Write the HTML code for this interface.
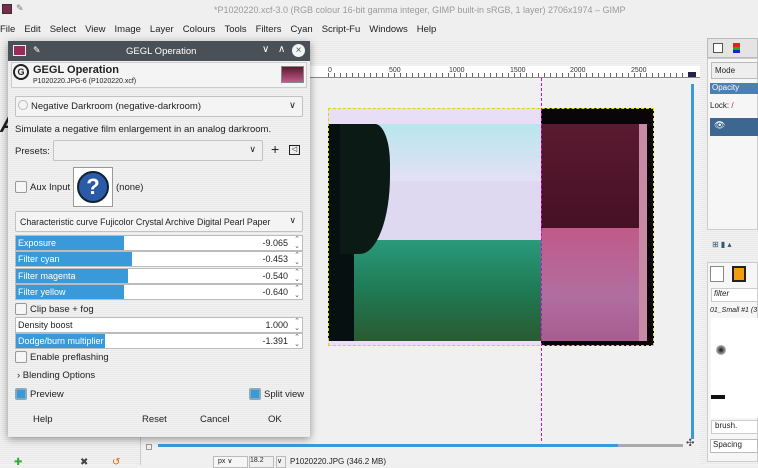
<!DOCTYPE html>
<html><head><meta charset="utf-8"><style>
*{margin:0;padding:0;box-sizing:border-box}
body{width:758px;height:465px;overflow:hidden;position:relative;background:#efefef;font-family:"Liberation Sans","DejaVu Sans",sans-serif;font-size:9px;color:#222}
.a{position:absolute}
.stripe{background:repeating-linear-gradient(#f2f2f2 0 1px,#e9e9e9 1px 2px)}
.sl{position:absolute;left:15px;width:288px;height:16px;background:#fff;border:1px solid #bcbcbc}
.sl .f{position:absolute;left:0;top:0;bottom:0;background:#3a9ad9}
.sl .l{position:absolute;left:2px;top:2px;color:#fff;font-size:9px}
.sl .v{position:absolute;right:14px;top:2px;font-size:9px}
.sl .s{position:absolute;right:2px;top:0;font-size:7px;line-height:7px;color:#555}
.cb{position:absolute;width:12px;height:12px;border:1px solid #999;background:#f6f6f6;border-radius:2px}
.cbon{background:#3a9ad9;border:2px solid #8ab}
</style></head><body>
<div class="a" style="left:0;top:0;width:758px;height:20px;background:#efefef"></div>
<div class="a" style="left:2px;top:4px;width:10px;height:10px;background:#7a2a4a;border:1px solid #333"></div>
<div class="a" style="left:16px;top:3px;color:#777;font-size:9px">✎</div>
<div class="a" style="left:214px;top:5px;color:#9a9a9a;font-size:9px;white-space:nowrap">*P1020220.xcf-3.0 (RGB colour 16-bit gamma integer, GIMP built-in sRGB, 1 layer) 2706x1974 – GIMP</div>
<div class="a" style="left:0;top:24px;font-size:9.5px;white-space:nowrap;word-spacing:0">
<span style="margin-right:9px">File</span><span style="margin-right:9px">Edit</span><span style="margin-right:9px">Select</span><span style="margin-right:9px">View</span><span style="margin-right:9px">Image</span><span style="margin-right:9px">Layer</span><span style="margin-right:9px">Colours</span><span style="margin-right:9px">Tools</span><span style="margin-right:9px">Filters</span><span style="margin-right:9px">Cyan</span><span style="margin-right:9px">Script-Fu</span><span style="margin-right:9px">Windows</span><span>Help</span></div>
<div class="a stripe" style="left:0;top:40px;width:705px;height:25px"></div>
<div class="a stripe" style="left:0;top:60px;width:140px;height:405px"></div>
<div class="a" style="left:0;top:112px;color:#222;font-size:22px;font-weight:bold;font-style:italic">A</div>
<div class="a" style="left:140px;top:66px;width:565px;height:399px;background:#f0f0f0;border-left:1px solid #ccc"></div>
<div class="a" style="left:140px;top:66px;width:560px;height:12px;background:#fff;border-bottom:1px solid #888"></div>
<div class="a" style="left:328px;top:67px;width:360px;height:10px;background:repeating-linear-gradient(90deg,#666 0 1px,transparent 1px 6px);clip-path:inset(6px 0 0 0)"></div>
<div class="a" style="left:328px;top:67px;font-size:7px;color:#333">0</div>
<div class="a" style="left:389px;top:67px;font-size:7px;color:#333">500</div>
<div class="a" style="left:449px;top:67px;font-size:7px;color:#333">1000</div>
<div class="a" style="left:510px;top:67px;font-size:7px;color:#333">1500</div>
<div class="a" style="left:570px;top:67px;font-size:7px;color:#333">2000</div>
<div class="a" style="left:631px;top:67px;font-size:7px;color:#333">2500</div>
<div class="a" style="left:688px;top:72px;width:8px;height:5px;background:#224"></div>
<div class="a" style="left:328px;top:108px;width:213px;height:238px;background:#e8def5"></div>
<div class="a" style="left:328px;top:124px;width:213px;height:57px;background:linear-gradient(#b8e6ee,#e4e0f4)"></div>
<div class="a" style="left:328px;top:181px;width:213px;height:60px;background:#ded8f0"></div>
<div class="a" style="left:328px;top:240px;width:213px;height:101px;background:linear-gradient(#2a9a7a,#1f7a55 50%,#2a5a30)"></div>
<div class="a" style="left:328px;top:124px;width:26px;height:217px;background:#071010"></div>
<div class="a" style="left:340px;top:124px;width:50px;height:130px;background:#0c1a16;border-radius:0 30% 60% 0"></div>
<div class="a" style="left:541px;top:108px;width:113px;height:238px;background:#0a0508"></div>
<div class="a" style="left:541px;top:124px;width:103px;height:108px;background:linear-gradient(#5a1a30,#461024)"></div>
<div class="a" style="left:541px;top:228px;width:103px;height:113px;background:linear-gradient(#c05a88,#b06ea0 60%,#a85c90)"></div>
<div class="a" style="left:639px;top:124px;width:8px;height:217px;background:#c78aa4"></div>
<div class="a" style="left:328px;top:108px;width:326px;height:238px;border:1px dashed #dada00"></div>
<div class="a" style="left:541px;top:78px;width:1px;height:365px;background:repeating-linear-gradient(#e000e0 0 3px,transparent 3px 5px)"></div>
<div class="a" style="left:691px;top:84px;width:3px;height:355px;background:#3a9ad9"></div>
<div class="a" style="left:158px;top:444px;width:460px;height:3px;background:#3a9ad9"></div>
<div class="a" style="left:618px;top:444px;width:65px;height:3px;background:#aaa"></div>
<div class="a" style="left:686px;top:438px;font-size:10px;color:#444">✣</div>
<div class="a" style="left:145px;top:432px;font-size:7px">0▫</div>
<div class="a" style="left:146px;top:444px;width:6px;height:6px;border:1px solid #999"></div>
<div class="a" style="left:213px;top:456px;width:35px;height:12px;border:1px solid #bbb;background:#f6f6f6;font-size:7px;padding-left:4px">px ∨</div>
<div class="a" style="left:249px;top:456px;width:25px;height:12px;border:1px solid #bbb;font-size:7px">18.2</div>
<div class="a" style="left:276px;top:456px;width:10px;height:12px;border:1px solid #bbb;font-size:7px">∨</div>
<div class="a" style="left:290px;top:457px;font-size:8px">P1020220.JPG (346.2 MB)</div>
<div class="a" style="left:14px;top:457px;color:#3a3;font-size:10px">✚</div>
<div class="a" style="left:80px;top:457px;color:#444;font-size:10px">✖</div>
<div class="a" style="left:112px;top:457px;color:#d60;font-size:10px">↺</div>
<div class="a stripe" style="left:700px;top:40px;width:58px;height:425px"></div>
<div class="a" style="left:707px;top:38px;width:51px;height:20px;background:#e4e4e4;border:1px solid #bbb"></div>
<div class="a" style="left:713px;top:43px;width:10px;height:10px;border:1px solid #555;background:#fff"></div>
<div class="a" style="left:733px;top:43px;width:7px;height:4px;background:#d22"></div>
<div class="a" style="left:733px;top:47px;width:7px;height:3px;background:#2a2"></div>
<div class="a" style="left:733px;top:50px;width:7px;height:3px;background:#22b"></div>
<div class="a" style="left:707px;top:58px;width:51px;height:172px;background:#f6f6f6;border:1px solid #ccc"></div>
<div class="a" style="left:711px;top:62px;width:47px;height:17px;border:1px solid #bbb;background:#eee;padding:3px;font-size:8px">Mode</div>
<div class="a" style="left:710px;top:83px;width:48px;height:11px;background:#4d7fb2;color:#fff;font-size:8px;padding-left:2px">Opacity</div>
<div class="a" style="left:710px;top:101px;font-size:8px">Lock: <span style="color:#a33">/</span></div>
<div class="a" style="left:710px;top:118px;width:48px;height:18px;background:#3d6690;color:#fff;font-size:9px;padding:2px 4px">👁</div>
<div class="a" style="left:712px;top:240px;font-size:8px;color:#357">⊞ ▮ ▴</div>
<div class="a" style="left:707px;top:262px;width:51px;height:200px;background:#f6f6f6;border:1px solid #ccc"></div>
<div class="a" style="left:710px;top:266px;width:14px;height:16px;border:1px solid #888;background:#fff"></div>
<div class="a" style="left:732px;top:266px;width:14px;height:16px;background:#f39c12;border:2px solid #222"></div>
<div class="a" style="left:711px;top:288px;width:47px;height:14px;background:#fff;border:1px solid #ccc;font-size:8px;font-style:italic;padding-left:2px">filter</div>
<div class="a" style="left:710px;top:307px;font-size:7px;font-style:italic;white-space:nowrap">01_Small #1 (3</div>
<div class="a" style="left:711px;top:318px;width:47px;height:100px;background:#fff"></div>
<div class="a" style="left:716px;top:345px;width:10px;height:10px;border-radius:50%;background:radial-gradient(#111,#fff)"></div>
<div class="a" style="left:711px;top:395px;width:14px;height:4px;background:#111"></div>
<div class="a" style="left:711px;top:420px;width:47px;height:14px;border:1px solid #ccc;background:#fff;font-size:8px;padding-left:3px">brush.</div>
<div class="a" style="left:710px;top:439px;width:48px;height:14px;border:1px solid #bbb;background:#fff;font-size:8px;padding-left:2px">Spacing</div>
<div class="a stripe" style="left:8px;top:41px;width:302px;height:396px;box-shadow:0 2px 8px rgba(0,0,0,.4)"></div>
<div class="a" style="left:8px;top:41px;width:302px;height:20px;background:#4a5057"></div>
<div class="a" style="left:13px;top:45px;width:13px;height:11px;background:#9a2a5a;border:1px solid #eee"></div>
<div class="a" style="left:33px;top:45px;color:#fff;font-size:9px">✎</div>
<div class="a" style="left:126px;top:46px;color:#fff;font-size:9.5px">GEGL Operation</div>
<div class="a" style="left:262px;top:44px;color:#fff;font-size:10px">∨</div>
<div class="a" style="left:278px;top:44px;color:#fff;font-size:10px">∧</div>
<div class="a" style="left:292px;top:44px;width:13px;height:13px;border-radius:50%;background:#f4f4f4;color:#4a5057;font-size:10px;text-align:center;line-height:13px">×</div>
<div class="a" style="left:11px;top:62px;width:296px;height:26px;border:1px solid #ccc;background:#f4f4f4"></div>
<div class="a" style="left:13px;top:64px;width:16px;height:16px;border:2px solid #222;border-radius:50%;font-size:9px;font-weight:bold;text-align:center;line-height:12px">G</div>
<div class="a" style="left:33px;top:64px;font-size:11px;font-weight:bold">GEGL Operation</div>
<div class="a" style="left:33px;top:78px;font-size:7px">P1020220.JPG-6 (P1020220.xcf)</div>
<div class="a" style="left:281px;top:66px;width:23px;height:17px;background:linear-gradient(#5a1a30,#c05a88);border:1px solid #888"></div>
<div class="a" style="left:15px;top:96px;width:288px;height:21px;border:1px solid #c2c2c2;background:#f4f4f4;border-radius:2px;padding:4px 0 0 15px;font-size:9.5px">Negative Darkroom (negative-darkroom)<span style="position:absolute;right:6px;top:3px">∨</span></div>
<div class="a" style="left:18px;top:100px;width:10px;height:10px;border:1px solid #bbb;border-radius:50%"></div>
<div class="a" style="left:15px;top:124px;font-size:9.5px">Simulate a negative film enlargement in an analog darkroom.</div>
<div class="a" style="left:15px;top:146px;font-size:9.5px">Presets:</div>
<div class="a" style="left:53px;top:140px;width:210px;height:21px;border:1px solid #c2c2c2;background:#f0f0f0;border-radius:2px"><span style="position:absolute;right:6px;top:3px;font-size:9px">∨</span></div>
<div class="a" style="left:271px;top:141px;font-size:14px">+</div>
<div class="a" style="left:289px;top:145px;width:11px;height:10px;border:1px solid #222;font-size:7px;line-height:8px;text-align:center">◁</div>
<div class="cb" style="left:15px;top:181px"></div>
<div class="a" style="left:30px;top:182px;font-size:9.5px">Aux Input</div>
<div class="a" style="left:73px;top:167px;width:40px;height:40px;border:1px solid #999;background:#fff"></div>
<div class="a" style="left:77px;top:171px;width:32px;height:32px;border-radius:50%;background:#2a5aa8;border:2px solid #123;color:#fff;font-size:22px;font-weight:bold;text-align:center;line-height:28px">?</div>
<div class="a" style="left:116px;top:182px;font-size:9.5px">(none)</div>
<div class="a" style="left:15px;top:211px;width:288px;height:21px;border:1px solid #c2c2c2;background:#f4f4f4;border-radius:2px;padding:5px 0 0 4px;font-size:8.8px;white-space:nowrap">Characteristic curve Fujicolor Crystal Archive Digital Pearl Paper<span style="position:absolute;right:6px;top:3px">∨</span></div>
<div class="sl" style="top:235px"><div class="f" style="width:108px"></div><div class="l">Exposure</div><div class="v">-9.065</div><div class="s">⌃<br>⌄</div></div>
<div class="sl" style="top:251px"><div class="f" style="width:116px"></div><div class="l">Filter cyan</div><div class="v">-0.453</div><div class="s">⌃<br>⌄</div></div>
<div class="sl" style="top:268px"><div class="f" style="width:112px"></div><div class="l">Filter magenta</div><div class="v">-0.540</div><div class="s">⌃<br>⌄</div></div>
<div class="sl" style="top:284px"><div class="f" style="width:108px"></div><div class="l">Filter yellow</div><div class="v">-0.640</div><div class="s">⌃<br>⌄</div></div>
<div class="cb" style="left:15px;top:303px"></div>
<div class="a" style="left:30px;top:304px;font-size:9.5px">Clip base + fog</div>
<div class="sl" style="top:317px"><div class="l" style="color:#222">Density boost</div><div class="v">1.000</div><div class="s">⌃<br>⌄</div></div>
<div class="sl" style="top:333px"><div class="f" style="width:89px"></div><div class="l" style="color:#fff">Dodge/burn multiplier</div><div class="v">-1.391</div><div class="s">⌃<br>⌄</div></div>
<div class="cb" style="left:15px;top:351px"></div>
<div class="a" style="left:30px;top:352px;font-size:9.5px">Enable preflashing</div>
<div class="a" style="left:17px;top:370px;font-size:9.5px">›&nbsp;Blending Options</div>
<div class="cb cbon" style="left:15px;top:388px"></div>
<div class="a" style="left:30px;top:389px;font-size:9.5px">Preview</div>
<div class="cb cbon" style="left:249px;top:388px"></div>
<div class="a" style="left:264px;top:389px;font-size:9.5px">Split view</div>
<div class="a" style="left:33px;top:414px;font-size:9.5px">Help</div>
<div class="a" style="left:142px;top:414px;font-size:9.5px">Reset</div>
<div class="a" style="left:200px;top:414px;font-size:9.5px">Cancel</div>
<div class="a" style="left:268px;top:414px;font-size:9.5px">OK</div>
</body></html>
